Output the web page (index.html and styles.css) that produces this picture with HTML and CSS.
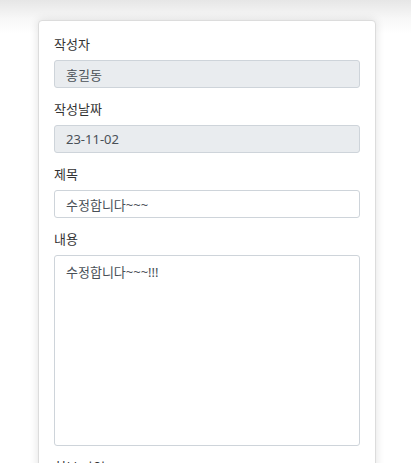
FILE: index.html
```html
<!DOCTYPE html>
<html lang="ko">
<head>
<meta charset="utf-8">
<link rel="stylesheet" href="styles.css">
</head>
<body>
<div class="card">
  <div class="group">
    <label class="label">작성자</label>
    <input class="field readonly" type="text" value="홍길동" readonly>
  </div>
  <div class="group">
    <label class="label">작성날짜</label>
    <input class="field readonly" type="text" value="23-11-02" readonly>
  </div>
  <div class="group">
    <label class="label">제목</label>
    <input class="field" type="text" value="수정합니다~~~">
  </div>
  <div class="group">
    <label class="label">내용</label>
    <textarea class="field area">수정합니다~~~!!!</textarea>
  </div>
  <div class="group">
    <label class="label">첨부 파일</label>
    <input class="field" type="text" value="">
  </div>
</div>
</body>
</html>
```

FILE: styles.css
```css
html, body {
  margin: 0;
  padding: 0;
}
body {
  background: linear-gradient(#e6e6e6 0px, #f7f7f7 18px, #ffffff 34px);
  font-family: "Noto Sans", "Noto Sans CJK KR", sans-serif;
  height: 463px;
  overflow: hidden;
}
.card {
  box-sizing: border-box;
  width: 338px;
  margin: 20px 0 0 38px;
  background: #fff;
  border: 1px solid #dcdcdc;
  border-radius: 4px;
  box-shadow: 0 0 10px rgba(0, 0, 0, 0.12);
  padding: 13px 15px 40px;
}
.group {
  margin-bottom: 11px;
}
.label {
  display: block;
  font-size: 13px;
  line-height: 20px;
  color: #333;
  margin-bottom: 6px;
}
.field {
  display: block;
  box-sizing: border-box;
  width: 100%;
  height: 28px;
  margin: 0;
  padding: 0 11px;
  font-family: "Noto Sans", "Noto Sans CJK KR", sans-serif;
  font-size: 13px;
  color: #495057;
  background: #fff;
  border: 1px solid #ced4da;
  border-radius: 3px;
  outline: none;
}
.readonly {
  background: #e9ecef;
}
.area {
  height: 191px;
  padding: 6px 11px;
  line-height: 20px;
  resize: none;
}
```
